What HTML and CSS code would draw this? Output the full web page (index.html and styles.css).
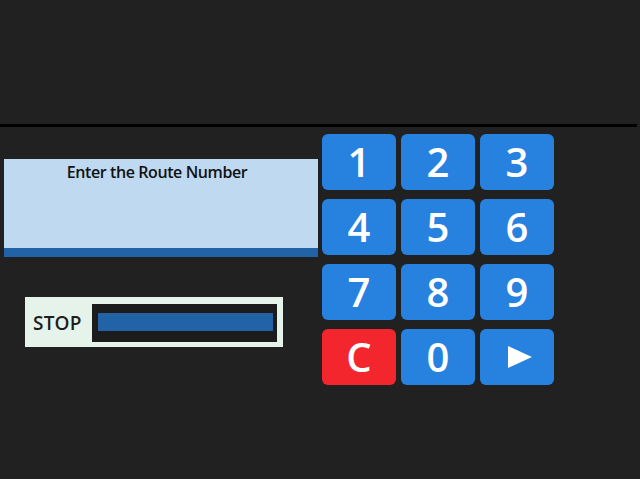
FILE: index.html
```html
<!DOCTYPE html>
<html>
<head>
<meta charset="utf-8">
<link rel="stylesheet" href="styles.css">
</head>
<body>
<div class="top"></div>
<div class="rule"></div>
<main class="main">
  <section class="left">
    <div class="route">
      <div class="route-body">Enter the Route Number</div>
      <div class="route-bar"></div>
    </div>
    <div class="stop">
      <span class="stop-label">STOP</span>
      <div class="stop-field"><div class="stop-bar"></div></div>
    </div>
  </section>
  <section class="keypad">
    <button class="key">1</button>
    <button class="key">2</button>
    <button class="key">3</button>
    <button class="key">4</button>
    <button class="key">5</button>
    <button class="key">6</button>
    <button class="key">7</button>
    <button class="key">8</button>
    <button class="key">9</button>
    <button class="key key-clear">C</button>
    <button class="key">0</button>
    <button class="key"><svg class="play" width="24" height="22" viewBox="0 0 24 22"><polygon points="0,0 24,11 0,22" fill="#fff"/></svg></button>
  </section>
</main>
</body>
</html>
```
FILE: styles.css
```css
html, body {
  margin: 0;
  padding: 0;
  background: #212121;
  width: 640px;
  height: 479px;
  overflow: hidden;
  font-family: "Open Sans", "Liberation Sans", sans-serif;
}
.top {
  height: 124px;
}
.rule {
  height: 3px;
  width: 637px;
  background: #000;
}
.main {
  display: flex;
}
.left {
  width: 318px;
  padding-left: 4px;
  padding-top: 32px;
  display: flex;
  flex-direction: column;
}
.route {
  width: 314px;
  display: flex;
  flex-direction: column;
}
.route-body {
  height: 89px;
  background: #bfd9f1;
  color: #111;
  font-weight: 600;
  font-size: 16px;
  letter-spacing: -0.4px;
  text-align: center;
  box-sizing: border-box;
  padding-top: 2px;
  padding-right: 8px;
  line-height: 22px;
}
.route-bar {
  height: 9px;
  background: #2262a6;
}
.stop {
  margin-top: 40px;
  margin-left: 21px;
  width: 258px;
  height: 50px;
  box-sizing: border-box;
  background: #e6f3ea;
  display: flex;
  align-items: center;
  padding: 2px 6px 0 8px;
}
.stop-label {
  font-weight: 600;
  font-size: 19px;
  letter-spacing: 0.2px;
  color: #1e1e1e;
  width: 59px;
}
.stop-field {
  width: 185px;
  height: 38px;
  box-sizing: border-box;
  background: #1c1c1c;
  padding: 9px 4px 11px 6px;
}
.stop-bar {
  height: 18px;
  background: #2262a6;
}
.keypad {
  padding-top: 7px;
  display: grid;
  grid-template-columns: repeat(3, 74px);
  grid-template-rows: repeat(4, 56px);
  column-gap: 5px;
  row-gap: 9px;
}
.key {
  border: none;
  margin: 0;
  padding: 0;
  border-radius: 6px;
  background: #2681df;
  color: #fff;
  font-family: "Open Sans", "Liberation Sans", sans-serif;
  font-weight: 600;
  font-size: 40px;
  line-height: 1;
  display: flex;
  align-items: center;
  justify-content: center;
}
.key-clear {
  background: #f3262e;
}
.play {
  display: block;
  margin-left: 5px;
}
```
